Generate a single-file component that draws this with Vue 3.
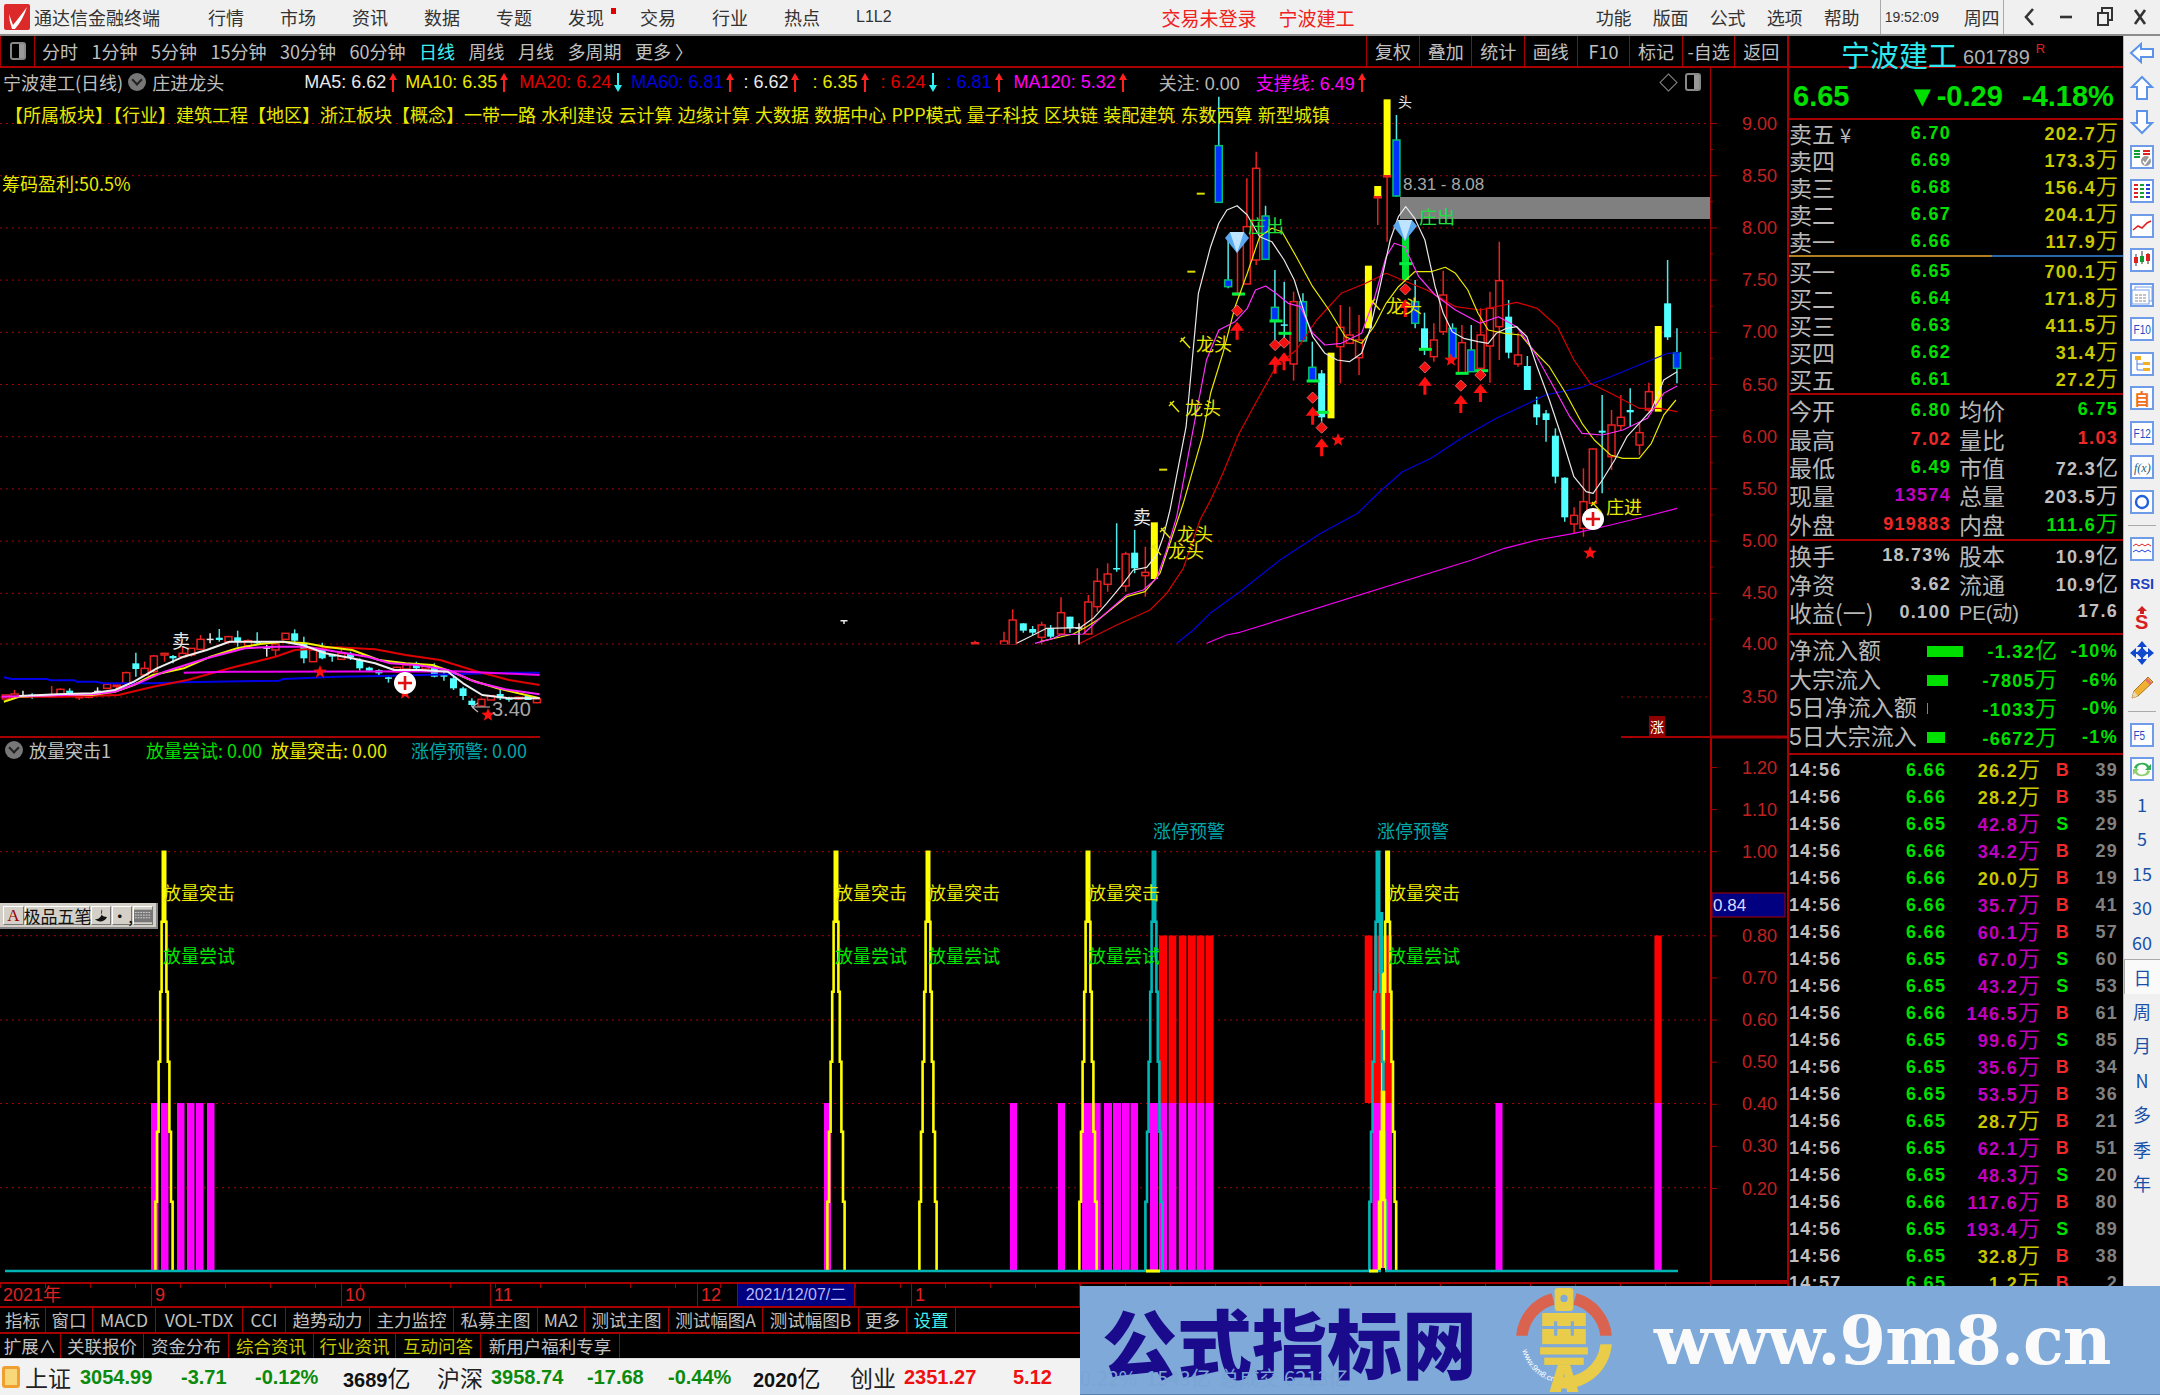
<template>
  <div class="screen">
    <header class="topbar">
      <svg class="logo" viewBox="0 0 26 26" width="26" height="26">
        <rect width="26" height="26" rx="2" fill="#dc2a2a" />
        <path d="M5 10 L9 21 Q14 15 23 3 Q19 16 11 25 L8 25 Q5 17 5 10Z" fill="#fff" />
      </svg>
      <span class="app-name">通达信金融终端</span>
      <nav class="menu">
        <span v-for="m in menu" :key="m" class="menu-item" :class="{ dotted: m === '发现', latin: m === 'L1L2' }">{{ m }}</span>
      </nav>
      <span class="login">交易未登录</span>
      <span class="login name">宁波建工</span>
      <nav class="menu right">
        <span v-for="m in menuRight" :key="m" class="menu-item">{{ m }}</span>
      </nav>
      <div class="clock"><span class="time">19:52:09</span><span>周四</span></div>
      <div class="winbtns">
        <svg width="150" height="34" viewBox="0 0 150 34">
          <path d="M23 9 L16 17 L23 25" class="win" />
          <path d="M50 17 H62" class="win" />
          <path d="M88 13 H98 V25 H88 Z M92 13 V8 H102 V20 H98" class="win thin" />
          <path d="M125 10 L135 24 M135 10 L125 24" class="win" />
        </svg>
      </div>
    </header>

    <main class="body">
      <section class="left">
        <div class="toolbar">
          <div class="collapse"><span class="collapse-box"></span></div>
          <span v-for="p in periods" :key="p" class="period" :class="{ on: p === '日线' }">{{ p }}</span>
          <span class="spring"></span>
          <span v-for="b in chartBtns" :key="b" class="chart-btn">{{ b }}</span>
        </div>

        <div class="chart-wrap">
          <svg class="chart" width="1787" height="1214" viewBox="0 68 1787 1214">
            <defs>
              <clipPath id="mainClip"><path d="M0 68H1710V644.5H545V737H0Z" /></clipPath>
              <path id="gem" d="M-12 -4 L-7 -10 H7 L12 -4 L0 11 Z" />
            </defs>

            <!-- grid -->
            <g class="grid">
              <line v-for="g in mainAxis" :key="g.t" x1="0" :y1="g.y" x2="1710" :y2="g.y" />
              <line x1="0" y1="644" x2="1710" y2="644" />
              <line x1="0" y1="697" x2="540" y2="697" />
              <line x1="1621" y1="697" x2="1710" y2="697" />
              <line v-for="g in subGrid" :key="g" x1="0" :y1="g" x2="1710" :y2="g" />
            </g>

            <g clip-path="url(#mainClip)">
              <rect x="1400" y="197" width="310" height="22" fill="#808080" />
              <text x="1403" y="190" class="gray-label">8.31 - 8.08</text>

              <!-- candles -->
              <g v-for="(c, n) in candles" :key="n">
                <line :x1="c.x" :y1="c.wt" :x2="c.x" :y2="c.wb" :class="'wick-' + c.t" />
                <rect :x="c.x - 3.5" :y="c.bt" width="7" :height="c.h" :class="'body-' + c.t" />
              </g>
              <rect x="1402" y="236" width="7" height="44" fill="#00e030" />
              <line x1="1210" y1="107" x2="1210" y2="122" stroke="#bbb" />
              <g v-for="(t, n) in greenTicks" :key="'t' + n">
                <rect :x="t[0] - 6" :y="t[1] - 1.5" width="13" height="3" fill="#00f040" />
              </g>
              <rect v-for="(t, n) in dashes" :key="'d' + n" :x="t[0]" :y="t[1]" width="8" height="2" fill="#dcdc00" />

              <!-- moving averages -->
              <polyline v-for="l in lines" :key="l.c" :points="l.pts" class="ma" :stroke="l.c" />
              <polyline v-for="(l, n) in leftLines" :key="'l' + n" :points="l.pts" class="ma thick" :stroke="l.c" />

              <!-- signals -->
              <path v-for="(a, n) in arrows" :key="'a' + n" :d="a" fill="#ff1010" />
              <rect
                v-for="(d, n) in diamonds"
                :key="'m' + n"
                x="-4"
                y="-4"
                width="8"
                height="8"
                fill="#f01010"
                stroke="#ff9090"
                stroke-width="0.6"
                :transform="`translate(${d[0]} ${d[1]}) rotate(45)`"
              />
              <polygon v-for="(s, n) in stars" :key="'s' + n" :points="s" fill="#ff1010" />
              <g v-for="(g, n) in gems" :key="'g' + n" :transform="`translate(${g[0]} ${g[1]})`">
                <use href="#gem" fill="#5aa8f0" />
                <path d="M-7 -10 L0 11 L7 -10Z" fill="#bfe4ff" />
              </g>
              <g v-for="(p, n) in plusMarks" :key="'p' + n" :transform="`translate(${p[0]} ${p[1]})`">
                <circle r="11" fill="#fff" />
                <path d="M-7 0H7M0 -7V7" stroke="#e01010" stroke-width="2.6" />
              </g>

              <text v-for="(t, n) in chartTexts" :key="'x' + n" :x="t.x" :y="t.y" class="mark" :class="t.k" :fill="t.c">{{ t.t }}</text>
              <path
                v-for="(h, n) in hammers"
                :key="'h' + n"
                :transform="`translate(${h[0]} ${h[1]})`"
                d="M-7 -6 L2 4 M-8 -2 L-3 -7"
                stroke="#e8e800"
                stroke-width="1.4"
                fill="none"
              />
              <text x="492" y="716" class="gray-label big">3.40</text>
              <path d="M472 707 H490 M472 707 L478 703 M472 707 L478 712" stroke="#bbb" fill="none" stroke-width="1.2" />
            </g>

            <!-- lower pane -->
            <rect v-for="(b, n) in subBars" :key="'b' + n" :x="b.x" :y="1103" :width="b.w" height="168" fill="#ff00ff" />
            <rect v-for="(b, n) in redBars" :key="'r' + n" :x="b.x" :y="935.5" :width="b.w" height="167.5" fill="#ff0000" />
            <polyline v-for="(s, n) in spikes" :key="'k' + n" :points="s.pts" class="spike" :stroke="s.c" />
            <line x1="5" y1="1271" x2="1678" y2="1271" stroke="#00b4b4" stroke-width="2.6" />
            <rect x="1146" y="1269.5" width="14" height="3" fill="#ffff00" />
            <rect x="1369" y="1269.5" width="9" height="3" fill="#ffff00" />
            <rect x="1381" y="1268" width="4" height="5" fill="#000" />
            <text v-for="(t, n) in subTexts" :key="'u' + n" :x="t.x" :y="t.y" class="mark" :fill="t.c">{{ t.t }}</text>

            <!-- axis -->
            <line x1="1710.5" y1="68" x2="1710.5" y2="737" class="axis" />
            <line x1="1711" y1="737" x2="1711" y2="1282" stroke="#b00000" stroke-width="2" />
            <line x1="1710" y1="1281" x2="1787" y2="1281" stroke="#b00000" stroke-width="2" />
            <line x1="1621" y1="737" x2="1710" y2="737" stroke="#a80000" stroke-width="2" />
            <line x1="0" y1="737" x2="540" y2="737" stroke="#a80000" stroke-width="2" />
            <line x1="1710" y1="737" x2="1787" y2="737" stroke="#a80000" stroke-width="3" />
            <g v-for="g in mainAxis" :key="'m' + g.t">
              <line x1="1710" :y1="g.y" x2="1717" :y2="g.y" class="axis" />
              <line x1="1710" :y1="g.y + 26" x2="1713" :y2="g.y + 26" class="axis" />
              <text x="1777" :y="g.y + 6" class="axis-text">{{ g.t }}</text>
            </g>
            <text x="1777" y="650" class="axis-text">4.00</text>
            <text x="1777" y="703" class="axis-text">3.50</text>
            <g v-for="g in subAxis" :key="'s' + g.t">
              <line x1="1710" :y1="g.y" x2="1717" :y2="g.y" class="axis" />
              <text x="1777" :y="g.y + 6" class="axis-text">{{ g.t }}</text>
            </g>
            <rect x="1712" y="893" width="73" height="24" fill="#000080" stroke="#a80000" stroke-width="1" />
            <text x="1713" y="911" class="cursor-text">0.84</text>
            <rect x="1649" y="716" width="16" height="20" fill="#900000" />
            <text x="1650" y="732" class="badge-text">涨</text>
          </svg>

          <div class="legend top">
            <span class="stock">宁波建工(日线)</span>
            <span class="chevron"></span>
            <span class="stock">庄进龙头</span>
            <span
              v-for="(m, n) in maLegend"
              :key="n"
              class="ma-item"
              :style="{ color: m.c, marginLeft: m.ml + 'px' }"
            >
              {{ m.t }}
              <svg v-if="m.a" width="8" height="21" viewBox="0 0 8 21" class="ma-arrow">
                <path v-if="m.a === 'up'" d="M4 1 L8 8 H5 V20 H3 V8 H0Z" fill="#ff2020" />
                <path v-else d="M4 20 L8 13 H5 V1 H3 V13 H0Z" fill="#30f0f0" />
              </svg>
            </span>
          </div>
          <div class="chart-tools">
            <span class="tool-diamond"></span>
            <span class="collapse-box"></span>
          </div>
          <div class="legend blocks">【所属板块】【行业】建筑工程【地区】浙江板块【概念】一带一路 水利建设 云计算 边缘计算 大数据 数据中心 PPP模式 量子科技 区块链 装配建筑 东数西算 新型城镇</div>
          <div class="legend profit">筹码盈利:50.5%</div>
          <div class="legend sub">
            <span class="chevron"></span>
            <span class="stock">放量突击1</span>
            <span class="sub-item first" style="color: #00e000">放量尝试: 0.00</span>
            <span class="sub-item" style="color: #e8e800">放量突击: 0.00</span>
            <span class="sub-item third" style="color: #00a8a8">涨停预警: 0.00</span>
          </div>

          <div class="ime">
            <span class="ime-btn ime-a">A</span>
            <span class="ime-btn ime-name">极品五笔</span>
            <span class="ime-btn">
              <svg width="16" height="16" viewBox="0 0 16 16"><path d="M9 1 C7 6 9 9 14 9 C12 14 5 15 2 11 C6 12 10 8 9 1Z" fill="#111" /></svg>
            </span>
            <span class="ime-btn ime-dots">·,</span>
            <span class="ime-btn ime-key">
              <svg width="20" height="14" viewBox="0 0 20 14"><rect width="20" height="14" fill="#777" /><path d="M1 3H19M1 6H19M1 9H19" stroke="#ddd" stroke-dasharray="2 1" /></svg>
            </span>
          </div>
        </div>

        <div class="time-axis">
          <span v-for="(c, n) in timeCells" :key="n" class="time-cell" :class="{ picked: c.on }" :style="{ width: c.w + 'px' }">{{ c.t }}</span>
        </div>
        <div class="tabs">
          <span v-for="t in tabs1" :key="t.t" class="tab" :class="t.k" :style="{ width: t.w + 'px' }">{{ t.t }}</span>
        </div>
        <div class="tabs">
          <span v-for="t in tabs2" :key="t.t" class="tab" :class="t.k" :style="{ width: t.w + 'px' }">{{ t.t }}</span>
        </div>
      </section>

      <aside class="panel">
        <div class="title">
          <span class="title-name">宁波建工</span>
          <span class="title-code">601789</span>
          <span class="title-r">R</span>
        </div>
        <div class="quote">
          <span class="q-price">6.65</span>
          <span class="q-change">▼-0.29</span>
          <span class="q-pct">-4.18%</span>
        </div>

        <div v-for="r in sells" :key="r.l" class="row book">
          <span class="label">{{ r.l }}<em v-if="r.y" class="yen">¥</em></span>
          <span class="val green">{{ r.p }}</span>
          <span class="amount">{{ r.v }}<i>万</i></span>
        </div>
        <div class="split"></div>
        <div v-for="r in buys" :key="r.l" class="row book">
          <span class="label">{{ r.l }}</span>
          <span class="val green">{{ r.p }}</span>
          <span class="amount">{{ r.v }}<i>万</i></span>
        </div>
        <div class="rule first-rule"></div>

        <div v-for="r in stats1" :key="r[0]" class="row stat">
          <span class="label">{{ r[0] }}</span>
          <span class="val" :class="r[2]">{{ r[1] }}</span>
          <span class="label second">{{ r[3] }}</span>
          <span class="val2" :class="r[5]">{{ r[4] }}<i v-if="r[6]">{{ r[6] }}</i></span>
        </div>
        <div class="rule stats-mid"></div>
        <div v-for="r in stats2" :key="r[0]" class="row stat">
          <span class="label">{{ r[0] }}</span>
          <span class="val">{{ r[1] }}</span>
          <span class="label second" :class="{ mixed: r[4] }">{{ r[2] }}</span>
          <span class="val2">{{ r[3] }}<i v-if="r[5]">{{ r[5] }}</i></span>
        </div>
        <div class="rule stats-end"></div>
        <div v-for="f in flows" :key="f.l" class="row flow">
          <span class="flow-label">{{ f.l }}</span>
          <span class="flow-bar-cell"><span class="flow-bar" :style="{ width: f.w + 'px' }"></span></span>
          <span class="flow-val">{{ f.v }}<i>{{ f.u }}</i></span>
          <span class="flow-pct">{{ f.p }}</span>
        </div>
        <div class="rule flow-end"></div>

        <div v-for="(t, n) in ticks" :key="n" class="row tick">
          <span class="t-time">{{ t.t }}</span>
          <span class="t-price">{{ t.p }}</span>
          <span class="t-amount" :class="{ big: t.v > 33 }">{{ t.v.toFixed(1) }}<i>万</i></span>
          <span class="t-side" :class="t.s === 'B' ? 'red' : 'green'">{{ t.s }}</span>
          <span class="t-count">{{ t.n }}</span>
        </div>
      </aside>

      <nav class="side">
        <template v-for="(s, n) in sideItems" :key="n">
          <div v-if="s.k === 'sep'" class="side-sep"></div>
          <div v-else-if="s.k === 'text'" class="side-item side-text" :class="{ picked: s.on }">{{ s.t }}</div>
          <div v-else class="side-item">
            <svg width="26" height="26" viewBox="0 0 26 26">
              <path v-if="s.k === 'left'" d="M2 13 L12 4 V9 H24 V17 H12 V22Z" class="arrow-i" />
              <path v-else-if="s.k === 'up'" d="M13 2 L23 12 H18 V24 H8 V12 H3Z" class="arrow-i" />
              <path v-else-if="s.k === 'down'" d="M13 24 L23 14 H18 V2 H8 V14 H3Z" class="arrow-i" />
              <text v-else-if="s.k === 'rsi'" x="1" y="18" class="ico-rsi" textLength="24" lengthAdjust="spacingAndGlyphs">RSI</text>
              <template v-else-if="s.k === 's'">
                <path d="M13 1 L18 6 H15 V9 H11 V6 H8Z" fill="#d02020" />
                <text x="6" y="24" class="ico-s">S</text>
              </template>
              <template v-else-if="s.k === 'move'">
                <path d="M13 1 L18 7 H8Z M13 25 L18 19 H8Z M1 13 L7 8 V18Z M25 13 L19 8 V18Z" fill="#1048d0" />
                <rect x="9" y="9" width="8" height="8" transform="rotate(45 13 13)" fill="#1048d0" />
                <path d="M13 6V20M6 13H20" stroke="#1048d0" stroke-width="2" />
              </template>
              <template v-else-if="s.k === 'pen'">
                <path d="M19 3 L24 8 L9 22 L3 24 L5 17Z" fill="#f0b030" stroke="#a87820" />
                <path d="M17 5 L22 10" stroke="#e07070" stroke-width="3" />
                <path d="M5 17 L9 22 L3 24Z" fill="#e8d8b0" />
              </template>
              <template v-else>
                <rect x="2" y="2" width="22" height="22" class="ico-box" />
                <template v-if="s.k === 'list'">
                  <path d="M5 7H11M5 10H11M5 13H11" stroke="#10a030" stroke-width="2" />
                  <path d="M14 7H21M14 10H21" stroke="#e02020" stroke-width="2" />
                  <circle cx="17" cy="17" r="5" fill="#999" />
                  <path d="M14 17 L16 20 L21 13" stroke="#fff" stroke-width="1.4" fill="none" />
                </template>
                <template v-else-if="s.k === 'grid'">
                  <path d="M5 7H9M5 11H9M5 15H9M5 19H9" stroke="#e02020" stroke-width="2" />
                  <path d="M11 7H15M11 11H15M11 15H15M11 19H15" stroke="#10a030" stroke-width="2" />
                  <path d="M17 7H21M17 11H21M17 15H21M17 19H21" stroke="#2040e0" stroke-width="2" />
                </template>
                <path v-else-if="s.k === 'line'" d="M4 17 L9 13 L13 15 L18 10 L22 8" stroke="#e02020" stroke-width="1.6" fill="none" />
                <template v-else-if="s.k === 'candle'">
                  <path d="M7 7V19M13 4V17M19 6V17" stroke="#333" />
                  <rect x="5" y="10" width="4" height="6" fill="#e02020" />
                  <rect x="11" y="9" width="4" height="6" fill="#10a030" />
                  <rect x="17" y="7" width="4" height="7" fill="#e02020" />
                </template>
                <template v-else-if="s.k === 'pages'">
                  <rect x="6" y="5" width="17" height="14" fill="#fff" stroke="#7aa2e8" />
                  <rect x="3" y="8" width="17" height="14" fill="#fff" stroke="#7aa2e8" />
                  <path d="M6 13H17M6 16H17M6 19H17" stroke="#888" stroke-dasharray="3 1" />
                </template>
                <text v-else-if="s.k === 'fkey'" x="4.5" y="18" class="ico-text" :textLength="s.t.length * 5.8" lengthAdjust="spacingAndGlyphs">{{ s.t }}</text>
                <template v-else-if="s.k === 'tree'">
                  <rect x="6" y="5" width="6" height="4" fill="#f0b020" />
                  <rect x="14" y="11" width="7" height="3" fill="#f0b020" />
                  <rect x="14" y="17" width="7" height="3" fill="#f0b020" />
                  <path d="M8 9V19H14M8 13H14" stroke="#5080e0" fill="none" />
                </template>
                <text v-else-if="s.k === 'zi'" x="5" y="20" class="ico-zi">自</text>
                <text v-else-if="s.k === 'fx'" x="5" y="18" class="ico-fx">f(x)</text>
                <circle v-else-if="s.k === 'ring'" cx="13" cy="13" r="6" fill="none" stroke="#2060d8" stroke-width="2.4" />
                <template v-else-if="s.k === 'wave'">
                  <path d="M4 10 l3 -2 l3 2 l3 -2 l3 2 l3 -2 l3 2" stroke="#e02020" fill="none" />
                  <path d="M4 16 l3 -2 l3 2 l3 -2 l3 2 l3 -2 l3 2" stroke="#2040e0" fill="none" />
                </template>
                <template v-else-if="s.k === 'refresh'">
                  <path d="M5 12 A8 6 0 0 1 20 10 L22 8 V14 H16 L18 12 A5 4 0 0 0 8 13Z" fill="#30b050" />
                  <path d="M21 15 A8 6 0 0 1 6 17 L4 19 V13 H10 L8 15 A5 4 0 0 0 18 14Z" fill="#90d070" />
                </template>
              </template>
            </svg>
          </div>
        </template>
      </nav>
    </main>

    <footer class="status">
      <span class="status-icon"></span>
      <span v-for="(s, n) in statusItems" :key="n" class="status-item" :class="s.k" :style="{ width: s.w + 'px' }">{{ s.t }}<i v-if="s.u">{{ s.u }}</i></span>
    </footer>

    <div class="banner">
      <span class="banner-cn">公式指标网</span>
      <svg class="banner-logo" width="108" height="108" viewBox="-52 -52 104 104">
        <path d="M-46 -4 A46 46 0 0 1 -12 -45 L-9 -34 A35 35 0 0 0 -35 -4Z" fill="#d9634f" />
        <path d="M46 -4 A46 46 0 0 0 12 -45 L9 -34 A35 35 0 0 1 35 -4Z" fill="#d9634f" />
        <path d="M46 4 A46 46 0 0 1 -8 46 L-6 35 A35 35 0 0 0 35 4Z" fill="#e8cc4a" />
        <path id="logoArc" d="M-40 10 A41 41 0 0 0 -6 41" fill="none" />
        <text class="logo-url"><textPath href="#logoArc">www.9m8.cn</textPath></text>
        <rect x="-9" y="-50" width="18" height="22" rx="3" fill="#e8cc4a" />
        <circle cx="0" cy="-40" r="3.5" fill="#7fa9d8" />
        <rect x="-21" y="-26" width="42" height="30" fill="#e8cc4a" />
        <path d="M-8 -18V-4M8 -18V-4M-21 -12H21" stroke="#7fa9d8" stroke-width="3" />
        <rect x="-23" y="7" width="46" height="7" fill="#e8cc4a" />
        <rect x="-19" y="17" width="38" height="7" fill="#e8cc4a" />
        <path d="M-6 24 L-14 50 H-3 L0 32 L3 50 H14 L6 24Z" fill="#e8cc4a" />
      </svg>
      <span class="banner-url">www.9m8.cn</span>
      <span class="banner-ghost">0.22%&nbsp;&nbsp;1543亿&nbsp;&nbsp;总成交&nbsp;6213亿</span>
    </div>
  </div>
</template>

<script setup>
// crop origins and scales of the measured coordinates below
const upper = (x, y) => [1080 + x / 2.45, 60 + y / 3]
const lowLeft = (x, y) => [x / 2.613, 600 + y / 3]
const rise = (x, y) => [960 + x / 3, 480 + y / 3]
const pts = (f, list) => list.map(([x, y]) => f(x, y).map((v) => v.toFixed(1)).join(',')).join(' ')
const slot = (i) => 1218.8 + 9.35 * i

const menu = ['行情', '市场', '资讯', '数据', '专题', '发现', '交易', '行业', '热点', 'L1L2']
const menuRight = ['功能', '版面', '公式', '选项', '帮助']
const periods = ['分时', '1分钟', '5分钟', '15分钟', '30分钟', '60分钟', '日线', '周线', '月线', '多周期', '更多 〉']
const chartBtns = ['复权', '叠加', '统计', '画线', 'F10', '标记', '-自选', '返回']

const maLegend = [
  { t: 'MA5: 6.62', c: '#e8e8e8', a: 'up', ml: 80 },
  { t: 'MA10: 6.35', c: '#e8e800', a: 'up', ml: 8 },
  { t: 'MA20: 6.24', c: '#e00000', a: 'down', ml: 11 },
  { t: 'MA60: 6.81', c: '#0000e0', a: 'up', ml: 9 },
  { t: ': 6.62', c: '#e8e8e8', a: 'up', ml: 9 },
  { t: ': 6.35', c: '#e8e800', a: 'up', ml: 13 },
  { t: ': 6.24', c: '#e00000', a: 'down', ml: 12 },
  { t: ': 6.81', c: '#0000e0', a: 'up', ml: 10 },
  { t: 'MA120: 5.32', c: '#ff00ff', a: 'up', ml: 11 },
  { t: '关注: 0.00', c: '#b8b8b8', ml: 32 },
  { t: '支撑线: 6.49', c: '#ff00ff', a: 'up', ml: 16 }
]

const mainAxis = ['9.00', '8.50', '8.00', '7.50', '7.00', '6.50', '6.00', '5.50', '5.00', '4.50'].map((t, i) => ({
  t,
  y: 123.5 + i * 52.2
}))
const subAxis = ['1.20', '1.10', '1.00', '0.80', '0.70', '0.60', '0.50', '0.40', '0.30', '0.20'].map((t) => ({
  t,
  y: 851.7 + (1 - parseFloat(t)) * 421
}))
const subGrid = [851.7, 935.7, 1020, 1103.5, 1187.7]

// [slot, type, wick top, body top, body bottom, wick bottom]
const upperCandles = [
  [0, 'b', 110, 257, 427, 427], [1, 'b', 540, 660, 680, 685], [2, 'u', 560, 700, 701, 702], [3, 'u', 355, 500, 672, 672],
  [4, 'u', 275, 325, 600, 615], [5, 'b', 437, 468, 598, 600], [6, 'b', 630, 742, 780, 850], [7, 'd', 665, 793, 797, 840],
  [8, 'u', 695, 725, 912, 962], [9, 'b', 700, 725, 843, 845], [10, 'b', 845, 922, 962, 965], [11, 'd', 930, 940, 1072, 1085],
  [13, 'u', 735, 802, 860, 970], [14, 'u', 740, 825, 850, 850], [15, 'u', 765, 840, 893, 945], [17, 'u', 408, 409, 410, 495],
  [18, 'u', 345, 346, 347, 545], [19, 'b', 165, 240, 408, 410], [21, 'b', 660, 725, 790, 805], [22, 'd', 758, 805, 870, 885],
  [23, 'u', 790, 840, 890, 905], [24, 'u', 632, 705, 815, 825], [25, 'b', 790, 805, 895, 900], [26, 'u', 795, 848, 938, 940],
  [27, 'b', 795, 870, 935, 935], [28, 'u', 745, 825, 925, 930], [29, 'u', 695, 745, 858, 968], [30, 'u', 545, 662, 800, 900],
  [31, 'd', 720, 770, 878, 895], [32, 'u', 820, 885, 912, 920], [33, 'd', 888, 918, 990, 990], [34, 'd', 1010, 1033, 1072, 1095],
  [35, 'd', 1050, 1060, 1080, 1145], [36, 'd', 1105, 1127, 1250, 1270], [37, 'd', 1252, 1253, 1372, 1385], [38, 'u', 1342, 1366, 1392, 1420],
  [39, 'u', 1225, 1325, 1405, 1430], [40, 'u', 1165, 1167, 1330, 1330], [41, 'd', 1005, 1112, 1118, 1300], [42, 'u', 1050, 1095, 1190, 1230],
  [43, 'u', 1005, 1072, 1097, 1110], [44, 'd', 985, 1050, 1057, 1100], [45, 'u', 1090, 1118, 1155, 1185], [46, 'u', 968, 995, 1050, 1055],
  [48, 'd', 600, 730, 832, 840], [49, 'b', 805, 878, 925, 970],
  [12, 'y', 878, 878, 1075, 1075], [16, 'y', 617, 617, 805, 805], [17, 'y', 378, 378, 408, 408], [18, 'y', 118, 118, 345, 345], [47, 'y', 798, 798, 1055, 1055]
]
const riseCandles = [
  [45, 'u', 482, 488, 490, 490], [132, 'u', 455, 483, 495, 495], [158, 'u', 388, 420, 495, 495], [190, 'd', 430, 430, 452, 458],
  [218, 'd', 438, 447, 458, 465], [245, 'u', 425, 435, 472, 495], [272, 'd', 435, 445, 470, 475], [303, 'u', 352, 398, 462, 465],
  [330, 'd', 410, 410, 445, 458], [357, 'w', 430, 442, 444, 495], [385, 'u', 345, 366, 462, 465], [412, 'u', 265, 304, 380, 395],
  [443, 'u', 250, 282, 313, 335], [470, 'd', 130, 264, 266, 275], [497, 'u', 215, 222, 318, 335], [524, 'd', 150, 218, 265, 280],
  [556, 'u', 200, 277, 287, 350], [583, 'y', 127, 127, 297, 297]
]
const leftCandles = [
  [15, 'u', 285, 285, 297, 297], [38, 'u', 270, 282, 292, 295], [60, 'w', 272, 285, 287, 290], [84, 'd', 280, 284, 286, 296],
  [135, 'u', 258, 285, 287, 290], [158, 'u', 265, 268, 285, 285], [182, 'd', 265, 272, 285, 290], [207, 'u', 285, 287, 293, 300],
  [232, 'u', 283, 285, 292, 295], [255, 'w', 262, 272, 280, 285], [280, 'u', 250, 253, 265, 268], [305, 'u', 255, 255, 257, 275],
  [330, 'u', 215, 218, 250, 255], [355, 'd', 158, 190, 207, 230], [378, 'u', 185, 205, 225, 225], [402, 'u', 165, 168, 215, 220],
  [430, 'u', 160, 160, 165, 185], [452, 'd', 165, 168, 175, 190], [477, 'u', 140, 160, 170, 175], [500, 'u', 145, 145, 165, 170],
  [524, 'u', 105, 118, 148, 150], [549, 'w', 100, 116, 118, 130], [573, 'd', 87, 113, 120, 125], [597, 'u', 107, 110, 125, 130],
  [621, 'd', 92, 112, 125, 140], [648, 'u', 118, 122, 137, 140], [672, 'd', 97, 125, 130, 135], [697, 'w', 135, 142, 144, 170],
  [720, 'u', 130, 132, 150, 168], [746, 'u', 100, 100, 118, 120], [770, 'd', 88, 100, 122, 130], [794, 'd', 110, 130, 175, 190],
  [818, 'u', 148, 150, 185, 185], [842, 'd', 128, 150, 175, 178], [868, 'd', 165, 165, 170, 185], [892, 'u', 148, 160, 178, 180],
  [916, 'd', 155, 162, 172, 180], [940, 'd', 175, 180, 205, 212], [965, 'd', 200, 203, 212, 215], [990, 'd', 208, 210, 220, 225],
  [1015, 'd', 225, 232, 234, 248], [1037, 'u', 200, 202, 215, 218], [1062, 'u', 195, 195, 207, 215], [1088, 'd', 185, 190, 205, 215],
  [1112, 'u', 195, 195, 207, 215], [1135, 'd', 190, 200, 230, 232], [1160, 'd', 205, 225, 230, 242], [1185, 'd', 230, 235, 265, 270],
  [1210, 'd', 260, 265, 288, 300], [1233, 'd', 295, 302, 315, 320], [1258, 'u', 295, 298, 318, 320], [1283, 'u', 285, 287, 300, 300],
  [1307, 'd', 268, 282, 295, 300], [1330, 'd', 290, 295, 297, 305], [1355, 'u', 290, 292, 296, 300], [1380, 'd', 285, 288, 300, 300],
  [1403, 'u', 295, 296, 308, 310]
]
const toCandle = (x, t, wt, bt, bb, wb, oy) => ({
  x,
  t,
  wt: oy + wt / 3,
  bt: oy + bt / 3,
  h: Math.max((bb - bt) / 3, 1.5),
  wb: oy + wb / 3
})
const candles = [
  ...upperCandles.map(([i, t, a, b, c, d]) => toCandle(slot(i), t, a, b, c, d, 60)),
  ...riseCandles.map(([x, t, a, b, c, d]) => toCandle(960 + x / 3, t, a, b, c, d, 480)),
  ...leftCandles.map(([x, t, a, b, c, d]) => toCandle(x / 2.613, t, a, b, c, d, 600)),
  toCandle(844, 'w', 60, 60, 62, 72, 600)
]

const join = (a, b) => a + ' ' + b
const lines = [
  {
    c: '#0000e0',
    pts: join(
      pts(rise, [[650, 490], [700, 450], [750, 400], [840, 335]]),
      pts(upper, [[490, 1500], [590, 1420], [680, 1360], [730, 1300], [790, 1235], [860, 1195], [940, 1130], [1020, 1075], [1090, 1035], [1140, 1005], [1230, 982], [1300, 950], [1380, 910], [1440, 880], [1470, 878]])
    )
  },
  {
    c: '#f000f0',
    pts: join(
      pts(rise, [[740, 490], [800, 465], [840, 457]]),
      pts(upper, [[960, 1500], [1040, 1465], [1120, 1440], [1210, 1420], [1300, 1395], [1400, 1365], [1463, 1345]])
    )
  },
  {
    c: '#d80000',
    pts: join(
      pts(rise, [[360, 490], [470, 435], [570, 390], [620, 340], [670, 265], [720, 120]]),
      pts(upper, [[320, 1320], [350, 1240], [390, 1120], [430, 1030], [480, 920], [530, 870], [580, 780], [640, 700], [700, 670], [750, 640], [800, 665], [850, 690], [920, 740], [980, 750], [1020, 740], [1070, 727], [1120, 745], [1170, 800], [1210, 900], [1250, 970], [1300, 1000], [1370, 1045], [1420, 1045], [1463, 1055]])
    )
  },
  {
    c: '#e8e800',
    pts: join(
      pts(rise, [[240, 485], [340, 462], [380, 440], [420, 415], [500, 350], [555, 335], [600, 280], [630, 190], [670, 70]]),
      pts(upper, [[300, 1130], [320, 1000], [350, 880], [380, 740], [410, 640], [440, 530], [470, 505], [495, 515], [530, 590], [570, 680], [610, 750], [650, 830], [690, 850], [720, 800], [750, 730], [780, 680], [820, 635], [860, 635], [895, 622], [920, 640], [950, 690], [975, 760], [1000, 810], [1040, 820], [1080, 825], [1110, 870], [1150, 920], [1190, 1000], [1230, 1090], [1260, 1140], [1300, 1185], [1330, 1195], [1370, 1195], [1400, 1150], [1430, 1065], [1460, 1020]])
    )
  },
  {
    c: '#ff30ff',
    pts: join(
      pts(rise, [[225, 490], [280, 475], [300, 465], [370, 462], [420, 415], [500, 345], [550, 330], [590, 295], [620, 210], [650, 110]]),
      pts(upper, [[280, 1090], [310, 900], [340, 810], [380, 785], [410, 745], [430, 690], [455, 678], [480, 700], [510, 730], [540, 740], [570, 820], [600, 855], [640, 850], [690, 820], [720, 720], [750, 590], [770, 550], [795, 560], [830, 650], [870, 705], [920, 750], [980, 790], [1025, 770], [1070, 800], [1110, 870], [1160, 980], [1200, 1070], [1230, 1120], [1280, 1125], [1330, 1110], [1390, 1075], [1430, 1000], [1463, 978]])
    )
  },
  {
    c: '#e8e8e8',
    pts: join(
      pts(rise, [[170, 490], [220, 465], [260, 445], [360, 443], [400, 415], [440, 370], [490, 310], [520, 270], [560, 262], [590, 225], [610, 170], [630, 90]]),
      pts(upper, [[260, 1100], [290, 700], [320, 560], [340, 490], [360, 450], [385, 437], [410, 465], [440, 530], [470, 545], [500, 600], [525, 660], [550, 760], [570, 830], [600, 880], [630, 900], [660, 905], [690, 880], [710, 810], [735, 680], [760, 540], [780, 470], [798, 440], [820, 475], [845, 540], [870, 680], [890, 760], [912, 815], [940, 835], [975, 845], [1000, 850], [1020, 820], [1045, 805], [1070, 800], [1095, 830], [1120, 920], [1150, 1020], [1180, 1130], [1210, 1250], [1240, 1295], [1257, 1300], [1280, 1260], [1310, 1200], [1340, 1130], [1370, 1090], [1400, 1050], [1430, 960], [1463, 935]])
    )
  }
]

const leftLines = [
  { c: '#0000e8', pts: pts(lowLeft, [[10, 232], [30, 237], [125, 237], [130, 241], [195, 241], [200, 245], [250, 245], [270, 250], [400, 250], [480, 247], [730, 242], [740, 237], [880, 230], [1000, 228], [1100, 225], [1340, 218], [1410, 218]]) },
  { c: '#e00000', pts: pts(lowLeft, [[5, 290], [170, 290], [310, 285], [400, 260], [490, 240], [600, 205], [720, 170], [770, 150], [880, 142], [980, 148], [1060, 165], [1150, 180], [1240, 212], [1330, 240], [1410, 255]]) },
  { c: '#f000f0', pts: pts(lowLeft, [[480, 218], [600, 215], [1190, 214], [1410, 225]]) },
  { c: '#f0f000', pts: pts(lowLeft, [[10, 305], [50, 290], [150, 285], [240, 285], [300, 275], [350, 255], [400, 225], [480, 205], [550, 170], [620, 145], [680, 132], [740, 125], [800, 130], [850, 140], [920, 150], [990, 180], [1060, 190], [1130, 195], [1180, 215], [1230, 240], [1300, 265], [1410, 295]]) },
  { c: '#ff20ff', pts: pts(lowLeft, [[5, 290], [100, 287], [240, 283], [300, 275], [360, 250], [430, 215], [540, 175], [640, 145], [720, 140], [800, 140], [880, 155], [960, 170], [1020, 190], [1090, 195], [1170, 210], [1240, 245], [1320, 268], [1410, 283]]) },
  { c: '#eeeeee', pts: pts(lowLeft, [[50, 288], [150, 283], [240, 280], [300, 270], [350, 245], [410, 205], [480, 170], [540, 150], [600, 125], [670, 125], [740, 125], [790, 135], [850, 160], [920, 175], [980, 190], [1030, 210], [1100, 210], [1170, 215], [1210, 250], [1260, 285], [1330, 295], [1410, 295]]) }
]

const upArrow = ([x, y]) => `M${x} ${y} L${x + 7} ${y + 9} H${x + 1.5} V${y + 18} H${x - 1.5} V${y + 9} H${x - 7} Z`
const arrows = [[385, 785], [478, 887], [500, 877], [570, 1040], [592, 1135], [797, 717], [845, 950], [933, 1005], [981, 972]].map(([x, y]) => upArrow(upper(x, y)))
const diamonds = [[385, 752], [478, 855], [500, 848], [570, 1013], [592, 1103], [797, 688], [845, 922], [933, 977], [981, 945]].map(([x, y]) => upper(x, y))
const greenTicks = [[387, 702], [479, 783], [501, 820], [570, 963], [592, 1057], [797, 611], [845, 868], [935, 940], [983, 932]].map(([x, y]) => upper(x, y))
const dashes = [[295, 398], [272, 632], [203, 1226]].map(([x, y]) => upper(x - 9, y))
const star = (cx, cy, r = 7) =>
  Array.from({ length: 10 }, (_, i) => {
    const a = (Math.PI * i) / 5 - Math.PI / 2
    const d = i % 2 ? r * 0.42 : r
    return `${(cx + Math.cos(a) * d).toFixed(1)},${(cy + Math.sin(a) * d).toFixed(1)}`
  }).join(' ')
const stars = [star(1338, 440), star(1451, 360), star(1590, 553), star(320, 672), star(405, 693), star(488, 715)]
const gems = [[1237, 242], [1405, 230]]
const plusMarks = [[1593, 519], [405, 683]]
const hammers = [[1188, 344], [1177, 408], [1168, 534], [1159, 551], [1378, 306], [1599, 508]]

const Y = '#e8e800'
const G = '#20e040'
const chartTexts = [
  { t: '龙头', x: 1196, y: 351, c: Y },
  { t: '龙头', x: 1185, y: 415, c: Y },
  { t: '龙头', x: 1177, y: 541, c: Y },
  { t: '龙头', x: 1168, y: 558, c: Y },
  { t: '龙头', x: 1386, y: 313, c: Y },
  { t: '庄进', x: 1606, y: 514, c: Y },
  { t: '庄出', x: 1248, y: 233, c: G },
  { t: '庄出', x: 1419, y: 224, c: G },
  { t: '卖', x: 1133, y: 524, c: '#e8e8e8' },
  { t: '卖', x: 172, y: 648, c: '#e8e8e8' },
  { t: '头', x: 1398, y: 107, c: '#e8e8e8', k: 'small' }
]

const stepY = [1271, 1201.7, 1131.7, 1061.7, 991.7, 921.7, 851.7]
const stepW = [8.6, 7, 5.4, 3.8, 2.4, 1.2]
const spike = (cx, c) => {
  const left = []
  const right = []
  stepW.forEach((w, i) => {
    left.push(`${cx - w},${stepY[i]}`, `${cx - w},${stepY[i + 1]}`)
    right.unshift(`${cx + w},${stepY[i + 1]}`, `${cx + w},${stepY[i]}`)
  })
  return { c, pts: [...left, ...right].join(' ') }
}
const YS = '#ffff00'
const CS = '#00b8b8'
const spikes = [
  spike(164, YS),
  spike(836, YS),
  spike(928, YS),
  spike(1088, YS),
  spike(1154, CS),
  spike(1387.6, YS),
  spike(1378, CS),
  { c: YS, pts: '1381,1271 1381,1200 1382,1200 1382,1092 1384,1092 1384,1200 1385,1200 1385,1271' },
  { c: YS, pts: '1383,972 1383,1030' },
  { c: CS, pts: '1380,912 1380,972 1382,972 1382,912' }
]

const subBars = [
  [824, 7], [1010, 7], [1058, 7], [151, 7.5], [161, 7.5], [177, 7.5], [187, 7.5], [196, 7.5], [207, 7.5],
  [1082, 18.6], [1104, 8], [1113, 8], [1122, 7.6], [1130.5, 7.5],
  [1150, 8], [1159, 8], [1168.6, 7.8], [1178.7, 7.8], [1188, 7.7], [1196.6, 7.9], [1205.5, 8],
  [1372.5, 19.5], [1495.5, 7], [1654.4, 7.3]
].map(([x, w]) => ({ x, w }))
const redBars = [
  [1159, 8], [1168.6, 7.8], [1178.7, 7.8], [1188, 7.7], [1196.6, 7.9], [1205.5, 8],
  [1364.7, 7.8], [1374, 18], [1654.4, 7.3]
].map(([x, w]) => ({ x, w }))

const subTexts = [
  ...[163, 835, 928, 1088, 1388].flatMap((x) => [
    { t: '放量突击', x, y: 900, c: Y },
    { t: '放量尝试', x, y: 963, c: '#00e800' }
  ]),
  { t: '涨停预警', x: 1153, y: 838, c: '#00a8a8' },
  { t: '涨停预警', x: 1377, y: 838, c: '#00a8a8' }
]

const timeCells = [
  { t: '2021年', w: 152 },
  { t: '9', w: 190 },
  { t: '10', w: 149 },
  { t: '11', w: 207 },
  { t: '12', w: 40 },
  { t: '2021/12/07/二', w: 117, on: true },
  { t: '', w: 57 },
  { t: '1', w: 168 }
]

const tabs1 = [
  { t: '指标', w: 46 }, { t: '窗口', w: 47 }, { t: 'MACD', w: 63 }, { t: 'VOL-TDX', w: 87 }, { t: 'CCI', w: 43 },
  { t: '趋势动力', w: 84 }, { t: '主力监控', w: 84 }, { t: '私募主图', w: 84 }, { t: 'MA2', w: 47 }, { t: '测试主图', w: 84 },
  { t: '测试幅图A', w: 94 }, { t: '测试幅图B', w: 96 }, { t: '更多', w: 48 }, { t: '设置', w: 49, k: 'cyan' }
]
const tabs2 = [
  { t: '扩展∧', w: 61 }, { t: '关联报价', w: 83 }, { t: '资金分布', w: 85 }, { t: '综合资讯', w: 85, k: 'olive' },
  { t: '行业资讯', w: 82, k: 'olive' }, { t: '互动问答', w: 85, k: 'olive' }, { t: '新用户福利专享', w: 139 }
]

const sells = [
  { l: '卖五', y: true, p: '6.70', v: '202.7' },
  { l: '卖四', p: '6.69', v: '173.3' },
  { l: '卖三', p: '6.68', v: '156.4' },
  { l: '卖二', p: '6.67', v: '204.1' },
  { l: '卖一', p: '6.66', v: '117.9' }
]
const buys = [
  { l: '买一', p: '6.65', v: '700.1' },
  { l: '买二', p: '6.64', v: '171.8' },
  { l: '买三', p: '6.63', v: '411.5' },
  { l: '买四', p: '6.62', v: '31.4' },
  { l: '买五', p: '6.61', v: '27.2' }
]
const stats1 = [
  ['今开', '6.80', 'green', '均价', '6.75', 'green'],
  ['最高', '7.02', 'red', '量比', '1.03', 'red'],
  ['最低', '6.49', 'green', '市值', '72.3', '', '亿'],
  ['现量', '13574', 'purple', '总量', '203.5', '', '万'],
  ['外盘', '919883', 'red', '内盘', '111.6', 'green', '万']
]
const stats2 = [
  ['换手', '18.73%', '股本', '10.9', false, '亿'],
  ['净资', '3.62', '流通', '10.9', false, '亿'],
  ['收益(一)', '0.100', 'PE(动)', '17.6', true]
]
const flows = [
  { l: '净流入额', w: 36, v: '-1.32', u: '亿', p: '-10%' },
  { l: '大宗流入', w: 21, v: '-7805', u: '万', p: '-6%' },
  { l: '5日净流入额', w: 1, v: '-1033', u: '万', p: '-0%' },
  { l: '5日大宗流入', w: 18, v: '-6672', u: '万', p: '-1%' }
]
const ticks = [
  ['6.66', 26.2, 'B', 39], ['6.66', 28.2, 'B', 35], ['6.65', 42.8, 'S', 29], ['6.66', 34.2, 'B', 29], ['6.66', 20.0, 'B', 19],
  ['6.66', 35.7, 'B', 41], ['6.66', 60.1, 'B', 57], ['6.65', 67.0, 'S', 60], ['6.65', 43.2, 'S', 53], ['6.66', 146.5, 'B', 61],
  ['6.65', 99.6, 'S', 85], ['6.65', 35.6, 'B', 34], ['6.65', 53.5, 'B', 36], ['6.65', 28.7, 'B', 21], ['6.65', 62.1, 'B', 51],
  ['6.65', 48.3, 'S', 20], ['6.66', 117.6, 'B', 80], ['6.65', 193.4, 'S', 89], ['6.65', 32.8, 'B', 38], ['6.65', 1.2, 'B', 2]
].map(([p, v, s, n], i) => ({ t: i === 19 ? '14:57' : '14:56', p, v, s, n }))

const sideItems = [
  { k: 'left' }, { k: 'up' }, { k: 'down' }, { k: 'list' }, { k: 'grid' }, { k: 'line' }, { k: 'candle' }, { k: 'pages' },
  { k: 'fkey', t: 'F10' }, { k: 'tree' }, { k: 'zi' }, { k: 'fkey', t: 'F12' }, { k: 'fx' }, { k: 'ring' }, { k: 'sep' },
  { k: 'wave' }, { k: 'rsi' }, { k: 's' }, { k: 'move' }, { k: 'pen' }, { k: 'sep' },
  { k: 'fkey', t: 'F5' }, { k: 'refresh' }, { k: 'text', t: '1' }, { k: 'text', t: '5' }, { k: 'text', t: '15' }, { k: 'text', t: '30' },
  { k: 'text', t: '60' }, { k: 'text', t: '日', on: true }, { k: 'text', t: '周' }, { k: 'text', t: '月' }, { k: 'text', t: 'N' },
  { k: 'text', t: '多' }, { k: 'text', t: '季' }, { k: 'text', t: '年' }
]

const statusItems = [
  { t: '上证', w: 55, k: 'name' },
  { t: '3054.99', w: 101, k: 'down' },
  { t: '-3.71', w: 74, k: 'down' },
  { t: '-0.12%', w: 88, k: 'down' },
  { t: '3689', u: '亿', w: 94, k: 'vol' },
  { t: '沪深', w: 54, k: 'name' },
  { t: '3958.74', w: 96, k: 'down' },
  { t: '-17.68', w: 81, k: 'down' },
  { t: '-0.44%', w: 85, k: 'down' },
  { t: '2020', u: '亿', w: 97, k: 'vol' },
  { t: '创业', w: 54, k: 'name' },
  { t: '2351.27', w: 109, k: 'up' },
  { t: '5.12', w: 60, k: 'up' }
]
</script>

<style>
html,
body {
  margin: 0;
  background: #000;
}
</style>

<style scoped>
.screen {
  width: 2160px;
  height: 1395px;
  position: relative;
  overflow: hidden;
  display: flex;
  flex-direction: column;
  background: #000;
  font-family: "Noto Sans CJK SC", "Liberation Sans", sans-serif;
  font-size: 18px;
  color: #c0c0c0;
}
i,
em {
  font-style: normal;
}

/* title bar */
.topbar {
  height: 36px;
  flex: none;
  box-sizing: border-box;
  display: flex;
  align-items: center;
  background: #f0f0f0;
  border-bottom: 2px solid #8c8c8c;
  color: #333;
}
.logo {
  margin-left: 4px;
  flex: none;
}
.app-name {
  margin-left: 4px;
  width: 174px;
}
.menu {
  display: flex;
  align-items: center;
  gap: 36px;
}
.menu-item {
  position: relative;
}
.menu-item.latin {
  font-family: "Liberation Sans", sans-serif;
  font-size: 16px;
}
.dotted::after {
  content: "";
  position: absolute;
  right: -12px;
  top: 4px;
  width: 5px;
  height: 6px;
  background: #e00000;
}
.login {
  color: #f02020;
  margin-left: 22px;
  font-size: 19px;
}
.menu + .login {
  margin-left: 270px;
}
.menu.right {
  margin-left: 241px;
  gap: 21px;
}
.clock {
  display: flex;
  height: 34px;
  align-items: center;
  margin-left: 20px;
  padding: 0 3px 0 4px;
  width: 124px;
  box-sizing: border-box;
  justify-content: space-between;
  border-left: 1px solid #aaa;
  border-right: 1px solid #aaa;
}
.time {
  font-family: "Liberation Sans", sans-serif;
  font-size: 14px;
}
.winbtns {
  flex: none;
  height: 34px;
  margin-left: 6px;
}
.win {
  fill: none;
  stroke: #333;
  stroke-width: 2.6;
}
.win.thin {
  stroke-width: 2;
}

/* main area */
.body {
  flex: 1;
  display: flex;
  min-height: 0;
}
.left {
  width: 1787px;
  flex: none;
  display: flex;
  flex-direction: column;
}
.toolbar {
  height: 32px;
  box-sizing: border-box;
  flex: none;
  display: flex;
  align-items: center;
  border-bottom: 2px solid #a80000;
}
.collapse {
  width: 35px;
  height: 30px;
  box-sizing: border-box;
  margin-right: 7px;
  display: flex;
  align-items: center;
  justify-content: center;
  border-left: 1px solid #a80000;
  border-right: 1px solid #a80000;
}
.collapse-box {
  display: inline-block;
  width: 16px;
  height: 18px;
  box-sizing: border-box;
  border: 2px solid #888;
  border-radius: 3px;
  background: linear-gradient(90deg, #000 0 55%, #999 55% 100%);
}
.period {
  margin-right: 13.5px;
  white-space: nowrap;
}
.period.on {
  color: #40f0f0;
}
.spring {
  flex: 1;
}
.chart-btn {
  width: 52.6px;
  height: 30px;
  box-sizing: border-box;
  flex: none;
  display: flex;
  align-items: center;
  justify-content: center;
  border-left: 1px solid #a80000;
  white-space: nowrap;
}
.chart-wrap {
  position: relative;
  height: 1214px;
  flex: none;
}
.chart {
  display: block;
}
.grid line {
  stroke: #a80000;
  stroke-width: 1;
  stroke-dasharray: 2 4;
}
.axis {
  stroke: #a00000;
  stroke-width: 1;
}
.axis-text {
  fill: #c02020;
  font-family: "Liberation Sans", sans-serif;
  font-size: 18px;
  text-anchor: end;
}
.cursor-text {
  fill: #d8d8ff;
  font-family: "Liberation Sans", sans-serif;
  font-size: 17px;
}
.badge-text {
  fill: #fff;
  font-size: 14px;
}
.gray-label {
  fill: #a8a8a8;
  font-family: "Liberation Sans", sans-serif;
  font-size: 17px;
}
.gray-label.big {
  font-size: 20px;
}
.mark {
  font-size: 18px;
}
.mark.small {
  font-size: 14px;
}
.ma {
  fill: none;
  stroke-width: 1.2;
  stroke-linejoin: round;
}
.ma.thick {
  stroke-width: 2;
}
.spike {
  fill: none;
  stroke-width: 2.6;
}
.wick-u {
  stroke: #e82020;
  stroke-width: 1.5;
}
.wick-d,
.wick-b {
  stroke: #50e8e8;
  stroke-width: 1.5;
}
.wick-w {
  stroke: #e8e8e8;
  stroke-width: 1.5;
}
.wick-y {
  stroke: none;
}
.body-u {
  fill: #000;
  stroke: #e82020;
  stroke-width: 1.5;
}
.body-d {
  fill: #50ffff;
}
.body-b {
  fill: #0030ff;
  stroke: #00c070;
  stroke-width: 1.5;
}
.body-w {
  fill: #e8e8e8;
}
.body-y {
  fill: #ffff00;
}

/* legends laid over the chart */
.legend {
  position: absolute;
  left: 0;
  white-space: nowrap;
}
.legend.top {
  top: 1px;
  left: 3px;
  height: 26px;
  display: flex;
  align-items: center;
}
.chevron {
  width: 18px;
  height: 18px;
  margin: 0 6px 0 5px;
  border-radius: 50%;
  background: #777;
  flex: none;
  position: relative;
}
.chevron::after {
  content: "";
  position: absolute;
  left: 5px;
  top: 3px;
  width: 6px;
  height: 6px;
  border-right: 2px solid #222;
  border-bottom: 2px solid #222;
  transform: rotate(45deg);
}
.ma-item {
  display: flex;
  align-items: center;
  font-family: "Liberation Sans", "Noto Sans CJK SC", sans-serif;
  font-size: 18px;
}
.ma-arrow {
  margin-left: 3px;
}
.chart-tools {
  position: absolute;
  left: 1662px;
  top: 5px;
  display: flex;
  align-items: center;
  gap: 10px;
}
.tool-diamond {
  width: 11px;
  height: 11px;
  border: 1px solid #888;
  transform: rotate(45deg);
}
.legend.blocks {
  top: 34px;
  left: 5px;
  color: #e8e800;
  font-size: 18px;
  line-height: 24px;
  word-spacing: 1.2px;
}
.legend.profit {
  top: 103px;
  left: 2px;
  color: #e8e800;
  font-size: 18px;
  line-height: 24px;
}
.legend.sub {
  top: 669px;
  left: 0;
  height: 26px;
  display: flex;
  align-items: center;
}
.sub-item {
  font-size: 18px;
  margin-left: 9px;
}
.sub-item.first {
  margin-left: 35px;
}
.sub-item.third {
  margin-left: 24px;
}
.ime {
  position: absolute;
  left: 0;
  top: 835px;
  width: 158px;
  height: 26px;
  box-sizing: border-box;
  display: flex;
  align-items: stretch;
  gap: 1px;
  padding: 3px 3px 2px;
  background: #d4d0c8;
  border-right: 2px solid #888;
  border-bottom: 2px solid #888;
}
.ime-btn {
  display: flex;
  align-items: center;
  justify-content: center;
  width: 18px;
  background: #d4d0c8;
  border-top: 1px solid #fff;
  border-left: 1px solid #fff;
  border-right: 1px solid #777;
  border-bottom: 1px solid #777;
  color: #111;
  font-size: 17px;
  line-height: 1;
}
.ime-a {
  width: 19px;
  color: #900;
  font-family: "Liberation Serif", serif;
}
.ime-name {
  flex: 1;
  white-space: nowrap;
}
.time-axis {
  height: 24px;
  flex: none;
  box-sizing: border-box;
  display: flex;
  border-top: 2px solid #a80000;
  background: repeating-linear-gradient(90deg, #a00000 0 1px, transparent 1px 45px) 0 0 / 100% 4px no-repeat;
}
.time-cell {
  box-sizing: border-box;
  flex: none;
  padding-left: 3px;
  line-height: 22px;
  border-right: 1px solid #a00000;
  color: #e02020;
  font-family: "Liberation Sans", "Noto Sans CJK SC", sans-serif;
  font-size: 18px;
  white-space: nowrap;
}
.time-cell.picked {
  background: #000080;
  color: #b8b8ff;
  font-size: 16px;
  text-align: center;
  padding-left: 0;
}
.tabs {
  height: 26px;
  flex: none;
  box-sizing: border-box;
  display: flex;
  border-top: 2px solid #a80000;
}
.tab {
  box-sizing: border-box;
  flex: none;
  text-align: center;
  line-height: 24px;
  border-right: 1px solid #a80000;
  font-size: 17.5px;
  white-space: nowrap;
  overflow: hidden;
}
.tab.cyan {
  color: #40f0f0;
}
.tab.olive {
  color: #c8c800;
}

/* quote panel */
.panel {
  width: 336px;
  flex: none;
  box-sizing: border-box;
  border-left: 2px solid #a80000;
  padding-right: 5px;
  overflow: hidden;
  font-family: "Noto Sans CJK SC", sans-serif;
}
.title {
  height: 32px;
  margin-right: -5px;
  box-sizing: border-box;
  display: flex;
  align-items: center;
  padding: 6px 0 0 52px;
  border-bottom: 2px solid #a80000;
}
.title-name {
  color: #30e8f0;
  font-size: 29px;
  line-height: 30px;
}
.title-code {
  margin-left: 6px;
  margin-top: 6px;
  font-family: "Liberation Sans", sans-serif;
  font-size: 20px;
  color: #b0b0b0;
}
.title-r {
  margin: -12px 0 0 6px;
  color: #e02020;
  font-size: 13px;
  font-family: "Liberation Sans", sans-serif;
}
.quote {
  height: 51.6px;
  margin-right: -5px;
  box-sizing: border-box;
  display: flex;
  align-items: center;
  border-bottom: 2px solid #a80000;
  padding: 7px 0 0 4px;
  color: #00e000;
  font-family: "Liberation Sans", sans-serif;
  font-weight: 700;
  font-size: 29px;
}
.q-price {
  width: 115px;
}
.q-change {
  width: 114px;
}
.row {
  display: flex;
  align-items: center;
  white-space: nowrap;
  font-family: "Liberation Sans", "Noto Sans CJK SC", sans-serif;
  font-weight: 700;
  font-size: 18px;
  letter-spacing: 1.3px;
}
.row i {
  font-family: "Noto Sans CJK SC", sans-serif;
  font-weight: 400;
  font-size: 22px;
  letter-spacing: 0;
  line-height: 1;
}
.label {
  font-family: "Noto Sans CJK SC", sans-serif;
  font-weight: 400;
  font-size: 23px;
  letter-spacing: 0;
  color: #b8b8b8;
  width: 46px;
  flex: none;
  line-height: 1;
}
.row .yen {
  font-size: 20px;
  margin-left: 5px;
}
.second {
  margin-left: 8px;
}
.mixed {
  font-size: 20px;
  font-family: "Liberation Sans", "Noto Sans CJK SC", sans-serif;
  letter-spacing: 0;
}
.book {
  height: 27px;
}
.val {
  width: 116px;
  flex: none;
  text-align: right;
  color: #c0c0c0;
}
.green {
  color: #00e000;
}
.red {
  color: #f02828;
}
.purple {
  color: #c000c0;
}
.amount {
  flex: 1;
  text-align: right;
  color: #c8c800;
  margin-top: -2px;
}
.val2 {
  flex: 1;
  text-align: right;
  margin-top: -2px;
}
.val2:not(.green):not(.red) {
  color: #c0c0c0;
}
.split {
  height: 3px;
  margin: 0 -5px 0 0;
  box-sizing: border-box;
  border-top: 2px solid #b08020;
  position: relative;
}
.split::after {
  content: "";
  position: absolute;
  left: 203px;
  right: 0;
  top: -2px;
  height: 2px;
  background: #2868a8;
}
.rule {
  height: 2px;
  background: #a80000;
  margin-right: -5px;
  margin-bottom: 2px;
}
.stats-mid {
  margin-bottom: 1px;
}
.stat {
  height: 28.4px;
}
.stats-end {
  margin-top: 6.4px;
}
.flow {
  height: 28.7px;
  color: #00e000;
}
.flow-label {
  width: 138px;
  flex: none;
  font-family: "Liberation Sans", "Noto Sans CJK SC", sans-serif;
  font-weight: 400;
  font-size: 23px;
  letter-spacing: 0;
  color: #b8b8b8;
  line-height: 1;
}
.flow-bar-cell {
  width: 40px;
  flex: none;
}
.flow-bar {
  display: block;
  height: 11px;
  background: #00e000;
}
.flow-val {
  width: 90px;
  flex: none;
  text-align: right;
  margin-top: -2px;
}
.flow-pct {
  flex: 1;
  text-align: right;
}
.flow-end {
  margin-top: 1px;
}
.tick {
  height: 27px;
}
.t-time {
  width: 117px;
  flex: none;
  color: #c0c0c0;
}
.t-price {
  width: 40px;
  flex: none;
  text-align: right;
  color: #00e000;
}
.t-amount {
  width: 94px;
  flex: none;
  text-align: right;
  color: #c8c800;
  margin-top: -2px;
}
.t-amount.big {
  color: #c000c0;
}
.t-side {
  width: 46px;
  flex: none;
  text-align: center;
}
.t-count {
  flex: 1;
  text-align: right;
  color: #808080;
}

/* side strip */
.side {
  width: 37px;
  flex: none;
  background: #f0f0f0;
  border-left: 1px solid #bbb;
  box-sizing: border-box;
  display: flex;
  flex-direction: column;
  align-items: center;
  overflow: hidden;
}
.side-item {
  height: 34.5px;
  width: 100%;
  flex: none;
  display: flex;
  align-items: center;
  justify-content: center;
}
.side-text {
  color: #1a50a8;
  font-family: "Noto Sans CJK SC", "Liberation Sans", sans-serif;
  font-size: 18px;
}
.side-text.picked {
  background: #fafafa;
  border-top: 1px solid #aaa;
  border-left: 1px solid #aaa;
  box-sizing: border-box;
}
.side-sep {
  height: 1px;
  margin: 6px 0;
  width: 28px;
  flex: none;
  background: #aaa;
}
.arrow-i {
  fill: #fff;
  stroke: #5b93ea;
  stroke-width: 2;
}
.ico-box {
  fill: #fff;
  stroke: #6f9ce8;
  stroke-width: 2;
}
.ico-text {
  fill: #2050c0;
  font-family: "Liberation Sans", sans-serif;
  font-size: 13px;
}
.ico-zi {
  fill: #f07020;
  font-size: 16px;
  font-weight: 700;
}
.ico-fx {
  fill: #1a6080;
  font-family: "Liberation Serif", serif;
  font-style: italic;
  font-size: 12px;
}
.ico-rsi {
  fill: #2040c0;
  font-family: "Liberation Sans", sans-serif;
  font-weight: 700;
  font-size: 14px;
}
.ico-s {
  fill: #d82020;
  font-family: "Liberation Sans", sans-serif;
  font-weight: 700;
  font-size: 20px;
}

/* status strip */
.status {
  height: 37px;
  flex: none;
  display: flex;
  align-items: center;
  background: #f2f2f2;
  border-top: 1px solid #ddd;
  box-sizing: border-box;
  font-family: "Liberation Sans", "Noto Sans CJK SC", sans-serif;
  font-size: 20px;
  font-weight: 700;
}
.status-icon {
  width: 18px;
  height: 22px;
  margin: 0 5px 0 2px;
  flex: none;
  box-sizing: border-box;
  border: 3px solid #f0a030;
  border-radius: 3px;
  background: #f8d878;
}
.status-item {
  flex: none;
  white-space: nowrap;
}
.status-item i {
  font-family: "Noto Sans CJK SC", sans-serif;
  font-weight: 400;
  font-size: 23px;
}
.status-item.name {
  font-family: "Noto Sans CJK SC", sans-serif;
  font-weight: 400;
  font-size: 23px;
  color: #222;
}
.status-item.down {
  color: #0c8a0c;
}
.status-item.up {
  color: #f01010;
}
.status-item.vol {
  color: #111;
}

/* watermark banner */
.banner {
  position: absolute;
  left: 1080px;
  top: 1286px;
  right: 0;
  bottom: 0;
  display: flex;
  align-items: center;
  background: #7fa9d8;
  border-bottom: 1px solid #5a82b0;
  box-sizing: border-box;
}
.banner-cn {
  margin-left: 22px;
  width: 408px;
  flex: none;
  color: #1a0a8c;
  font-family: "Noto Sans CJK SC", sans-serif;
  font-weight: 900;
  font-size: 75px;
  line-height: 1;
  white-space: nowrap;
}
.banner-logo {
  flex: none;
}
.banner-url {
  margin-left: 36px;
  color: #fafafa;
  font-family: "DejaVu Serif", serif;
  font-weight: 700;
  font-size: 67px;
  letter-spacing: -1px;
  white-space: nowrap;
}
.banner-ghost {
  position: absolute;
  left: 0;
  bottom: 2px;
  color: #7ba5d4;
  font-size: 20px;
  white-space: nowrap;
}
.logo-url {
  fill: #fff;
  font-family: "Liberation Sans", sans-serif;
  font-size: 8px;
}
</style>
